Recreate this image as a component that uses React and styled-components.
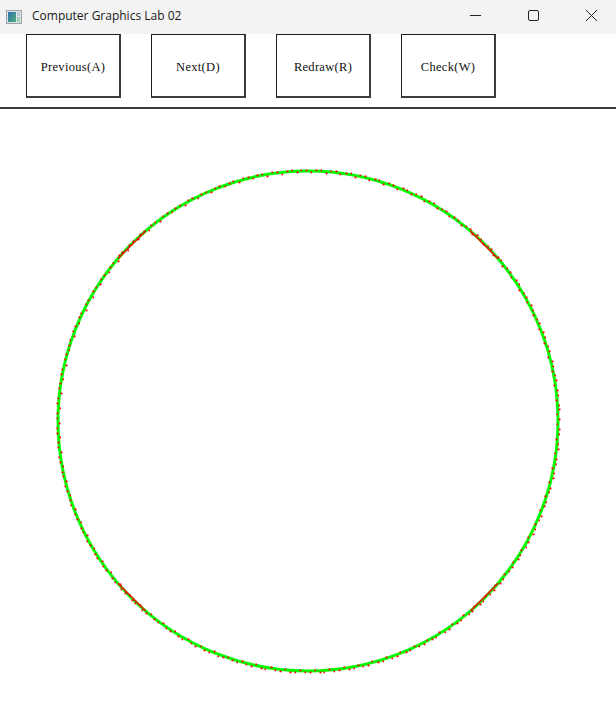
import React, { useMemo } from "react";
import styled, { createGlobalStyle } from "styled-components";

const GlobalStyle = createGlobalStyle`
  html, body {
    margin: 0;
    padding: 0;
    background: #ffffff;
  }
  #root {
    width: 616px;
    height: 727px;
  }
`;

const Window = styled.div`
  width: 616px;
  height: 727px;
  display: flex;
  flex-direction: column;
  background: #ffffff;
  overflow: hidden;
`;

const TitleBar = styled.div`
  height: 34px;
  flex: none;
  display: flex;
  align-items: center;
  background: #f3f3f3;
`;

const AppIcon = styled.span`
  display: flex;
  margin: 0 10px 0 6px;
`;

const Title = styled.span`
  flex: 1;
  font-family: "Open Sans", "Noto Sans", sans-serif;
  font-size: 12px;
  color: #1a1a1a;
  padding-bottom: 3px;
`;

const Controls = styled.div`
  display: flex;
  height: 100%;
  margin-right: -4px;
`;

const ControlBtn = styled.div`
  width: 58px;
  height: 100%;
  display: flex;
  align-items: center;
  justify-content: center;
  padding-bottom: 3px;
  box-sizing: border-box;
`;

const Toolbar = styled.div`
  height: 73px;
  flex: none;
  display: flex;
  align-items: flex-start;
  gap: 30px;
  padding-left: 26px;
  border-bottom: 2px solid #3a3a3a;
  box-sizing: content-box;
`;

const ToolButton = styled.button`
  width: 95px;
  height: 64px;
  margin: 0;
  padding: 3px 0 0;
  border: 1px solid #1e1e1e;
  border-right-width: 2px;
  border-bottom-width: 2px;
  border-right-color: #3c3c3c;
  border-bottom-color: #3c3c3c;
  background: #ffffff;
  font-family: "Liberation Serif", "DejaVu Serif", serif;
  font-size: 12.5px;
  font-weight: normal;
  color: #111;
  letter-spacing: 0.3px;
`;

const Canvas = styled.div`
  flex: 1;
  display: flex;
`;

const buttons = ["Previous(A)", "Next(D)", "Redraw(R)", "Check(W)"];

const CX = 308;
const CY = 312;
const R = 250;

function CircleDrawing() {
  const specks = useMemo(() => {
    const out = [];
    const n = 320;
    for (let i = 0; i < n; i++) {
      const a = (i / n) * Math.PI * 2 + 0.013;
      const side = i % 3 === 0 ? -1.2 : 1.2;
      const r = R + side;
      out.push({
        x: Math.round(CX + Math.cos(a) * r) - 0.5,
        y: Math.round(CY + Math.sin(a) * r) - 0.5,
        w: i % 2 ? 2 : 1.5,
      });
    }
    return out;
  }, []);

  const chords = useMemo(() => {
    const list = [];
    [45, 135, 225, 315].forEach((deg) => {
      const a0 = ((deg - 4.5) * Math.PI) / 180;
      const a1 = ((deg + 4.5) * Math.PI) / 180;
      list.push({
        x1: CX + Math.cos(a0) * R,
        y1: CY + Math.sin(a0) * R,
        x2: CX + Math.cos(a1) * R,
        y2: CY + Math.sin(a1) * R,
      });
    });
    return list;
  }, []);

  return (
    <svg width="616" height="618" viewBox="0 0 616 618">
      <circle cx={CX} cy={CY} r={R} fill="none" stroke="#00ff00" strokeWidth="3" />
      {chords.map((c, i) => (
        <line key={i} {...c} stroke="#ff0000" strokeWidth="1.4" />
      ))}
      {specks.map((p, i) => (
        <rect key={i} x={p.x} y={p.y} width={p.w} height="1.8" fill="#ff0000" />
      ))}
    </svg>
  );
}

export default function App() {
  return (
    <Window>
      <GlobalStyle />
      <TitleBar>
        <AppIcon>
          <svg width="16" height="14" viewBox="0 0 16 14">
            <defs>
              <linearGradient id="ig" x1="0" y1="0" x2="1" y2="1">
                <stop offset="0" stopColor="#2f6fb0" />
                <stop offset="1" stopColor="#4fb07a" />
              </linearGradient>
            </defs>
            <rect x="0.5" y="0.5" width="15" height="13" fill="#dfe4e8" stroke="#9aa3ab" />
            <rect x="2" y="2" width="8" height="10" fill="url(#ig)" />
            <rect x="11" y="2" width="3" height="4" fill="#bfcbd4" />
            <rect x="11" y="7" width="3" height="5" fill="#9fd0b0" />
          </svg>
        </AppIcon>
        <Title>Computer Graphics Lab 02</Title>
        <Controls>
          <ControlBtn>
            <svg width="13" height="13" viewBox="0 0 13 13">
              <line x1="1" y1="6.5" x2="12" y2="6.5" stroke="#222" strokeWidth="1" />
            </svg>
          </ControlBtn>
          <ControlBtn>
            <svg width="13" height="13" viewBox="0 0 13 13">
              <rect x="1.5" y="1.5" width="10" height="10" rx="1.5" fill="none" stroke="#222" strokeWidth="1" />
            </svg>
          </ControlBtn>
          <ControlBtn>
            <svg width="13" height="13" viewBox="0 0 13 13">
              <path d="M1 1 L12 12 M12 1 L1 12" stroke="#222" strokeWidth="1" />
            </svg>
          </ControlBtn>
        </Controls>
      </TitleBar>
      <Toolbar>
        {buttons.map((b) => (
          <ToolButton key={b}>{b}</ToolButton>
        ))}
      </Toolbar>
      <Canvas>
        <CircleDrawing />
      </Canvas>
    </Window>
  );
}
